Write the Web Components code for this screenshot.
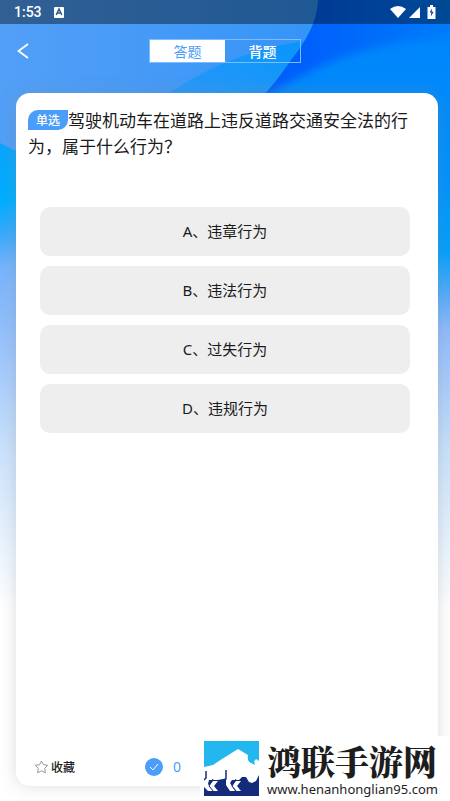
<!DOCTYPE html>
<html lang="zh-CN">
<head>
<meta charset="UTF-8">
<meta name="viewport" content="width=device-width, initial-scale=1">
<title>答题</title>
<style>
  html, body {
    margin: 0;
    height: 100%;
  }
  body {
    font-family: "Noto Sans", "Noto Sans CJK SC", sans-serif;
    color: #1a1a1a;
  }
</style>
</head>
<body>
<quiz-page>
  <status-bar slot="status" time="1:53"></status-bar>
  <quiz-header slot="header"></quiz-header>
  <quiz-card>
    <quiz-question type="单选">驾驶机动车在道路上违反道路交通安全法的行为，属于什么行为？</quiz-question>
    <quiz-option>A、违章行为</quiz-option>
    <quiz-option>B、违法行为</quiz-option>
    <quiz-option>C、过失行为</quiz-option>
    <quiz-option>D、违规行为</quiz-option>
    <quiz-footer slot="footer" right="0">收藏</quiz-footer>
  </quiz-card>
  <site-badge slot="badge" name="鸿联手游网">www.henanhonglian95.com</site-badge>
</quiz-page>

<script>
class QuizPage extends HTMLElement {
  constructor() {
    super();
    this.shadow = this.attachShadow({ mode: "open" });
    this.shadow.innerHTML = `
    <style>
    :host {
      display: flex;
      flex-direction: column;
      position: relative;
      min-height: 100vh;
      overflow: hidden;
      background: #fff;
    }
    .bg {
      position: absolute;
      inset: 0;
      width: 100%;
      height: 100%;
    }
    main {
      position: relative;
      display: flex;
      flex: 1;
      padding: 16px 12px 15px 16px;
    }
    </style>
    <svg class="bg" viewBox="0 0 450 801" preserveAspectRatio="none" aria-hidden="true">
      <defs>
        <linearGradient id="left" x1="0" y1="0" x2="0" y2="1">
          <stop offset=".24" stop-color="#0aa4fc"/>
          <stop offset=".33" stop-color="#00aeff"/>
          <stop offset=".38" stop-color="#36a9fc"/>
          <stop offset=".44" stop-color="#78b4fc"/>
          <stop offset=".54" stop-color="#92bffb"/>
          <stop offset=".74" stop-color="#cbe2fc"/>
          <stop offset="1" stop-color="#fff"/>
        </linearGradient>
        <linearGradient id="right" x1="0" y1="0" x2="0" y2="1">
          <stop offset="0" stop-color="#0082fa"/>
          <stop offset=".3" stop-color="#0092fc"/>
          <stop offset=".41" stop-color="#009ffc"/>
          <stop offset=".48" stop-color="#4fabfa"/>
          <stop offset=".54" stop-color="#8fbafa"/>
          <stop offset=".74" stop-color="#c8e1fb"/>
          <stop offset="1" stop-color="#fff"/>
        </linearGradient>
        <linearGradient id="leaf" x1="0" y1="0" x2="1" y2="0">
          <stop offset="0" stop-color="#529ff7"/>
          <stop offset=".5" stop-color="#459af7"/>
          <stop offset="1" stop-color="#3494f7"/>
        </linearGradient>
        <linearGradient id="wing" x1="0" y1="1" x2="1" y2="0">
          <stop offset="0" stop-color="#2c98f8"/>
          <stop offset="1" stop-color="#0796fb"/>
        </linearGradient>
        <linearGradient id="deep" x1="0" y1="0" x2="1" y2="0">
          <stop offset=".3" stop-color="#005ffb"/>
          <stop offset="1" stop-color="#007ff9"/>
        </linearGradient>
        <filter id="soft">
          <feGaussianBlur stdDeviation="4"/>
        </filter>
      </defs>
      <rect width="226" height="610" fill="url(#left)"/>
      <rect x="225" width="225" height="610" fill="url(#right)"/>
      <path d="M225 -10H470V36C370 38 312 66 265 98L225 120Z" fill="url(#deep)" filter="url(#soft)"/>
      <path d="M0 0H318C317 24 304 43 293 57C282 72 272 88 258 100L30 158L0 143Z" fill="url(#leaf)"/>
      <path d="M160 100C192 76 240 50 304 41C301 47 297 52 293 57C282 72 272 88 258 100Z" fill="url(#wing)"/>
    </svg>
    <slot name="status"></slot>
    <slot name="header"></slot>
    <main><slot></slot></main>
    <slot name="badge"></slot>
    `;
  }
}
customElements.define("quiz-page", QuizPage);

class StatusBar extends HTMLElement {
  constructor() {
    super();
    this.shadow = this.attachShadow({ mode: "open" });
    this.shadow.innerHTML = `
    <style>
    :host {
      position: relative;
      display: flex;
      align-items: center;
      height: 24px;
      padding: 0 14px;
      gap: 12px;
      color: #fff;
      background: rgba(0, 0, 0, .4);
      font: 500 14px/24px Roboto, sans-serif;
    }
    .icons {
      display: flex;
      align-items: center;
      margin-left: auto;
    }
    svg { display: block; }
    </style>
    <span>${this.getAttribute("time")}</span>
    <svg width="10" height="11" viewBox="0 0 10 11" aria-hidden="true">
      <rect width="10" height="11" rx="1" fill="#fff"/>
      <path d="M2.2 8L5 2L7.8 8M3.3 6H6.7" fill="none" stroke="#29598f" stroke-width="1.5"/>
    </svg>
    <div class="icons">
      <svg width="46" height="14" viewBox="0 0 46 14" fill="#fff" aria-hidden="true">
        <path d="M0 4Q8 -2 16 4L8 13Z"/>
        <path d="M30 2V13H19Z"/>
        <path d="M40 0H43V2H45.500V14H37.500V2H40Z"/>
        <path d="M42 3.500L39.500 7.500H41.300L40.800 11.500L43.700 6.800H41.700Z" fill="#0b4490"/>
      </svg>
    </div>
    `;
  }
}
customElements.define("status-bar", StatusBar);

class QuizHeader extends HTMLElement {
  constructor() {
    super();
    this.shadow = this.attachShadow({ mode: "open" });
    this.shadow.innerHTML = `
    <style>
    :host {
      position: relative;
      display: grid;
      grid-template-columns: 1fr 152px 1fr;
      align-items: center;
      height: 53px;
      padding: 0 16px;
    }
    button {
      margin: 0;
      padding: 0;
      border: 0;
      background: none;
      color: #fff;
      font: 14px/22px "Noto Sans CJK SC", sans-serif;
      cursor: pointer;
    }
    .back {
      width: 14px;
      height: 16px;
    }
    .back svg { display: block; }
    .tabs {
      display: flex;
      border: 1px solid #7dbcff;
    }
    .tabs button { flex: 1; font-weight: 500; }
    .tabs button.on {
      color: #4a9df8;
      background: #fff;
      font-weight: 400;
    }
    </style>
    <button class="back" aria-label="返回">
      <svg width="14" height="16" viewBox="0 0 14 16" fill="none" stroke="#fff" stroke-width="1.800">
        <path d="M12 1L2.500 8L12 15"/>
      </svg>
    </button>
    <div class="tabs">
      <button class="on">答题</button>
      <button>背题</button>
    </div>
    `;
  }
}
customElements.define("quiz-header", QuizHeader);

class QuizCard extends HTMLElement {
  constructor() {
    super();
    this.shadow = this.attachShadow({ mode: "open" });
    this.shadow.innerHTML = `
    <style>
    :host {
      display: flex;
      flex: 1;
      flex-direction: column;
      border-radius: 14px;
      background: #fff;
      box-shadow: 0 0 16px rgba(140, 140, 140, .3);
    }
    .body {
      display: flex;
      flex: 1;
      flex-direction: column;
      gap: 10px;
      padding: 14px 12px;
    }
    </style>
    <div class="body"><slot></slot></div>
    <slot name="footer"></slot>
    `;
  }
}
customElements.define("quiz-card", QuizCard);

class QuizQuestion extends HTMLElement {
  constructor() {
    super();
    this.shadow = this.attachShadow({ mode: "open" });
    this.shadow.innerHTML = `
    <style>
    :host {
      display: block;
      min-height: 90px;
    }
    p {
      margin: 0;
      color: #1a1a1a;
      font: 17px/26px "Noto Sans CJK SC", sans-serif;
    }
    .tag {
      display: inline-block;
      width: 40px;
      border-radius: 10px 0;
      background: #4a9df8;
      color: #fff;
      font-size: 12px;
      font-weight: 500;
      line-height: 20px;
      text-align: center;
      vertical-align: 2px;
    }
    </style>
    <p><span class="tag">${this.getAttribute("type")}</span><slot></slot></p>
    `;
  }
}
customElements.define("quiz-question", QuizQuestion);

class QuizOption extends HTMLElement {
  constructor() {
    super();
    this.shadow = this.attachShadow({ mode: "open" });
    this.shadow.innerHTML = `
    <style>
    :host {
      display: block;
      padding: 0 16px 0 12px;
    }
    button {
      display: block;
      width: 100%;
      padding: 12px;
      border: 0;
      border-radius: 10px;
      background: #eee;
      color: #1a1a1a;
      font: 15px/25px "Noto Sans", "Noto Sans CJK SC", sans-serif;
      cursor: pointer;
    }
    </style>
    <button><slot></slot></button>
    `;
  }
}
customElements.define("quiz-option", QuizOption);

class QuizFooter extends HTMLElement {
  constructor() {
    super();
    this.shadow = this.attachShadow({ mode: "open" });
    this.shadow.innerHTML = `
    <style>
    :host {
      display: flex;
      align-items: center;
      gap: 70px;
      height: 38px;
      padding: 0 18px;
    }
    button, .right {
      display: flex;
      align-items: center;
      padding: 0;
      border: 0;
      background: none;
    }
    button {
      gap: 2px;
      color: #222;
      font: 500 12px/20px "Noto Sans CJK SC", sans-serif;
      cursor: pointer;
    }
    .right {
      gap: 10px;
      color: #4a9df8;
      font-size: 14px;
      line-height: 20px;
    }
    </style>
    <button>
      <svg width="15" height="14" viewBox="0 0 15 14" fill="none" stroke="#999" stroke-linejoin="round" aria-hidden="true">
        <path d="M7.500 1L9.400 4.700L13.800 5.300L10.700 8.300L11.400 12.800L7.500 10.800L3.600 12.800L4.300 8.300L1.200 5.300L5.600 4.700Z"/>
      </svg>
      <slot></slot>
    </button>
    <span class="right">
      <svg width="18" height="18" viewBox="0 0 18 18" fill="none" aria-hidden="true">
        <circle cx="9" cy="9" r="9" fill="#4a9df8"/>
        <path d="M5 9L8 12L13 6" stroke="#fff"/>
      </svg>
      <span>${this.getAttribute("right")}</span>
    </span>
    `;
  }
}
customElements.define("quiz-footer", QuizFooter);

// site mark that floats over the bottom right corner
class SiteBadge extends HTMLElement {
  constructor() {
    super();
    this.shadow = this.attachShadow({ mode: "open" });
    this.shadow.innerHTML = `
    <style>
    :host {
      position: absolute;
      right: 0;
      bottom: 0;
      display: flex;
      align-items: center;
      gap: 8px;
      width: 250px;
      height: 65px;
      padding-left: 4px;
      box-sizing: border-box;
      background: #fff;
    }
    .text {
      display: flex;
      flex-direction: column;
      color: #1d1d1d;
      white-space: nowrap;
    }
    strong {
      font: 900 34px/40px "Noto Serif CJK SC", "Noto Sans CJK SC", serif;
    }
    a {
      color: inherit;
      font: 13px/16px "Noto Sans", sans-serif;
      text-decoration: none;
    }
    </style>
    <svg width="55" height="55" viewBox="0 0 55 55" aria-hidden="true">
      <path d="M0 0H55V55H0Z" fill="#142b7c"/>
      <path d="M0 0H55V32H0Z" fill="#22b8ef"/>
      <path d="M0 26L9 24L18 18L34 8L44 14C43 19 45 22 49 22L52 18L55 20V34L52 40L48 42L45 41L42 36L38 36L35 39H28L26 42L31 50H26L22 44V38L13 39H5L4 43L9 50H4L0 46Z" fill="#fff"/>
      <path d="M49 10C45 14 44 18 50 20L51 24L47 22C42 18 44 13 49 10Z" fill="#22b8ef"/>
      <path d="M22 29V38L15 40M2 30V37L0 39" fill="none" stroke="#142b7c" stroke-width="1.500"/>
      <path d="M9 40H14L10 45L14 50H9L5 45ZM32 40H37L33 45L37 50H32L28 45Z" fill="#fff"/>
      <path d="M9 38L5 45L10 51M32 38L28 45L33 51" fill="none" stroke="#142b7c" stroke-width="1"/>
    </svg>
    <div class="text">
      <strong>${this.getAttribute("name")}</strong>
      <a href="#"><slot></slot></a>
    </div>
    `;
  }
}
customElements.define("site-badge", SiteBadge);
</script>
</body>
</html>
